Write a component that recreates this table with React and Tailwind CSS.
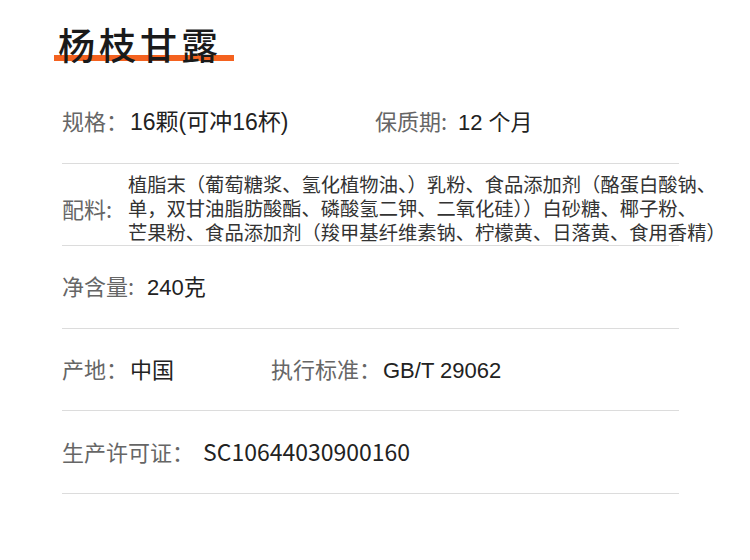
const cjk = "font-['Noto_Sans_CJK_SC',sans-serif]";
const latin = "font-['Liberation_Sans','Noto_Sans_CJK_SC',sans-serif]";

const Row = ({ children, className = "" }) => (
  <div className={`flex items-center h-[82.5px] border-b border-[#dcdcdc] ${className}`}>
    {children}
  </div>
);

const Line = ({ children }) => <div className="flex items-baseline">{children}</div>;

const Label = ({ children, className = "" }) => (
  <span className={`shrink-0 text-[22px] leading-none text-[#666] whitespace-nowrap ${cjk} ${className}`}>
    {children}
  </span>
);

const Value = ({ children, className = "" }) => (
  <span className={`shrink-0 leading-none text-[#222] whitespace-nowrap ${className}`}>
    {children}
  </span>
);

export default function App() {
  return (
    <div className={`w-[750px] h-[560px] bg-white ${cjk}`}>
      {/* 标题 */}
      <div className="h-[81px] pl-[54px] pt-[24px]">
        <span className="inline-block w-[180px] pl-[4px] text-[37px] font-medium leading-[40px] tracking-[4px] text-[#1a1a1a] bg-[linear-gradient(#f4621f,#f4621f)] bg-no-repeat bg-[length:100%_6px] bg-[position:0_31px]">
          杨枝甘露
        </span>
      </div>

      <div className="ml-[62px] w-[617px]">
        <Row>
          <Line>
            <Label className="w-[68px]">规格：</Label>
            <Value className={`w-[245px] text-[23px] ${latin}`}>16颗(可冲16杯)</Value>
            <Label className="w-[83px]">保质期:</Label>
            <Value className={`text-[22px] ${latin}`}>12 个月</Value>
          </Line>
        </Row>

        <Row className="pt-[8px]">
          <Label className="w-[66px]">配料:</Label>
          <div className="text-[19.3px] leading-[24px] text-[#333] whitespace-nowrap">
            <div>植脂末（葡萄糖浆、氢化植物油、）乳粉、食品添加剂（酪蛋白酸钠、</div>
            <div>单，双甘油脂肪酸酯、磷酸氢二钾、二氧化硅））白砂糖、椰子粉、</div>
            <div>芒果粉、食品添加剂（羧甲基纤维素钠、柠檬黄、日落黄、食用香精）</div>
          </div>
        </Row>

        <Row>
          <Line>
            <Label className="w-[85px]">净含量:</Label>
            <Value className={`text-[22px] ${latin}`}>240克</Value>
          </Line>
        </Row>

        <Row>
          <Line>
            <Label className="w-[68px]">产地：</Label>
            <Value className="w-[141px] text-[22px]">中国</Value>
            <Label className="w-[112px]">执行标准：</Label>
            <Value className={`text-[22px] ${latin}`}>GB/T 29062</Value>
          </Line>
        </Row>

        <Row>
          <Line>
            <Label className="w-[141px]">生产许可证：</Label>
            <Value className="text-[23px]">SC10644030900160</Value>
          </Line>
        </Row>
      </div>
    </div>
  );
}
